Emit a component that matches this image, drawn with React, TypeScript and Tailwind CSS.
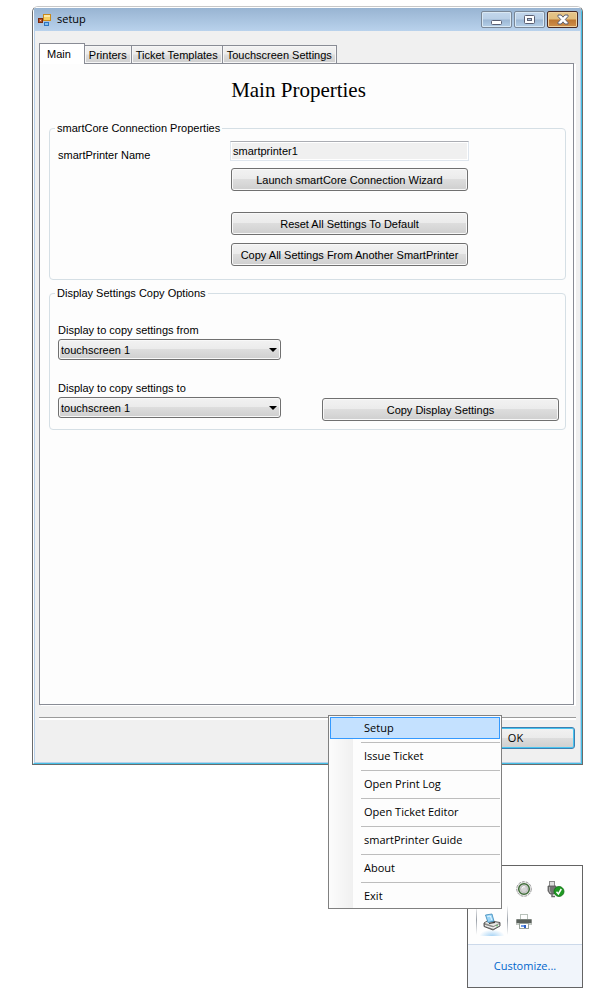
import { ReactNode, useId, useState } from 'react';
import { clsx } from 'clsx';

const TABS = ['Main', 'Printers', 'Ticket Templates', 'Touchscreen Settings'];

const MENU_ITEMS = [
  'Setup',
  'Issue Ticket',
  'Open Print Log',
  'Open Ticket Editor',
  'smartPrinter Guide',
  'About',
  'Exit',
];

function FormIcon() {
  return (
    <svg width="14" height="14" viewBox="0 0 14 14" aria-hidden="true" shapeRendering="crispEdges">
      <rect x="0" y="5" width="5" height="5" fill="#7a2a10" />
      <rect x="1" y="6" width="3" height="3" fill="#b5522a" />
      <rect x="2" y="7" width="1" height="1" fill="#f2c9a8" />
      <rect x="5" y="1" width="8" height="7" fill="#c98a1c" />
      <rect x="6" y="2" width="6" height="5" fill="#f6cf63" />
      <rect x="6" y="2" width="6" height="2" fill="#fce9a6" />
      <rect x="6" y="9" width="5" height="4" fill="#2f74c0" />
      <rect x="7" y="10" width="3" height="2" fill="#7fc0f2" />
    </svg>
  );
}

function SafelyRemoveIcon() {
  return (
    <svg width="18" height="18" viewBox="0 0 18 18" aria-hidden="true">
      <rect x="2.500" y="1.500" width="5" height="5" fill="#dedede" stroke="#8a8a8a" />
      <path d="M1 6h8v5l-2 3H3l-2-3z" fill="#747474" stroke="#555" strokeWidth="0.800" />
      <path d="M2.500 7v4l1.500 2" fill="none" stroke="#b0b0b0" />
      <path d="M5 14v2.500h3" fill="none" stroke="#6b6b6b" strokeWidth="1.500" />
      <circle cx="12" cy="11.500" r="5" fill="#1f9a22" stroke="#137016" strokeWidth="0.800" />
      <path d="M9.500 11.700l1.900 2.200 2.900-4.900" fill="none" stroke="#fff" strokeWidth="1.500" />
    </svg>
  );
}

function StatusDotIcon() {
  return (
    <svg width="16" height="16" viewBox="0 0 16 16" aria-hidden="true">
      <circle cx="8" cy="8" r="7.300" fill="#ececec" stroke="#9a9a9a" strokeDasharray="3 1" />
      <circle cx="8" cy="8" r="5.300" fill="#e2e2e2" stroke="#3f6b38" strokeWidth="1.500" />
      <circle cx="8" cy="8" r="3.600" fill="#d6d6d6" stroke="#b4b4b4" strokeWidth="0.800" />
      <path d="M6 7.500a2.200 2.200 0 0 1 3-1.600" fill="none" stroke="#fff" />
    </svg>
  );
}

function SmartPrinterIcon() {
  return (
    <svg width="18" height="18" viewBox="0 0 18 18" aria-hidden="true">
      <path d="M1 10l4-2.500 12 2v3.500l-7 4L1 13.500z" fill="#8d8d8a" stroke="#4c4c4c" strokeWidth="0.900" />
      <path d="M1.800 10L5 8l11.200 2-5.700 3z" fill="#e9e9e5" />
      <path d="M2 12.500l8.200 2.600 6-3.200" fill="none" stroke="#f5f5f5" strokeWidth="1.200" />
      <path d="M2.500 2l6.500-1 .500 2 1.500 5-6 1.500z" fill="#9bd6f8" stroke="#3c88b8" strokeWidth="0.800" />
      <path d="M4.300 3.500l3-.5 1.500 4" fill="none" stroke="#e8f7ff" />
      <path d="M6 10.300l6-1" stroke="#3a3a3a" strokeWidth="1.200" />
      <circle cx="14" cy="12.800" r="0.800" fill="#42b04a" />
    </svg>
  );
}

function PrinterIcon() {
  return (
    <svg width="16" height="16" viewBox="0 0 16 16" aria-hidden="true">
      <rect x="4.500" y="0.500" width="7" height="5" fill="#fff" stroke="#b9c2bb" />
      <rect x="0" y="5" width="16" height="6" rx="1" fill="#8b8f8b" />
      <rect x="1" y="6" width="14" height="3" fill="#59605a" />
      <rect x="1" y="5" width="14" height="1" fill="#7c837d" />
      <rect x="0" y="9" width="16" height="2" rx="1" fill="#c5cac5" />
      <rect x="3.500" y="9.500" width="9" height="5" fill="#fff" stroke="#9aa39c" />
      <rect x="5" y="11" width="3" height="2" fill="#6d9be6" />
      <rect x="8" y="11" width="2" height="3" fill="#2d5fc4" />
    </svg>
  );
}

function CaptionButton({ label, close, children }: { label: string; close?: boolean; children: ReactNode }) {
  return (
    <button
      type="button"
      aria-label={label}
      className={clsx(
        'flex h-[17px] w-[31px] items-center justify-center rounded-[2px] border',
        close
          ? 'border-[#4a2a24] bg-[linear-gradient(#e6c58a_0%,#e2bd7c_48%,#bd7631_52%,#cf8f4c_100%)] shadow-[inset_0_0_0_1px_#efd2a0]'
          : 'border-[#7a8796] bg-[linear-gradient(#c3d7ec_0%,#b9cfe6_48%,#9bb6d3_52%,#b4cfe8_100%)] shadow-[inset_0_0_0_1px_#d9e8f4]',
      )}
    >
      {children}
    </button>
  );
}

function TitleBar() {
  return (
    <header className="flex h-[23px] items-start justify-between bg-[linear-gradient(#98b4d2,#b9d2ec)] pr-[3px] pl-[4px]">
      <div className="flex h-full items-center gap-[5px]">
        <FormIcon />
        <h1 className="font-['Open_Sans',sans-serif] text-[11px] text-black">setup</h1>
      </div>
      <div className="mt-[3px] flex gap-[2px]">
        <CaptionButton label="Minimize">
          <svg width="12" height="13" viewBox="0 0 12 13" aria-hidden="true">
            <rect x="0.500" y="7.500" width="10" height="4" rx="1" fill="#fff" stroke="#5a5f72" />
          </svg>
        </CaptionButton>
        <CaptionButton label="Maximize">
          <svg width="11" height="9" viewBox="0 0 11 9" aria-hidden="true">
            <rect x="0.500" y="0.500" width="10" height="8" rx="1" fill="#fff" stroke="#5a5f72" />
            <rect x="3.500" y="3.500" width="4" height="2" fill="#a9c2de" stroke="#5a5f72" />
          </svg>
        </CaptionButton>
        <CaptionButton label="Close" close>
          <svg width="12" height="11" viewBox="0 0 12 11" aria-hidden="true">
            <path
              d="M1 1h3.200L6 3.200 7.800 1H11v1.500L8.300 5.500 11 8.500V10H7.800L6 7.800 4.200 10H1V8.500l2.700-3L1 2.500z"
              fill="#fff"
              stroke="#5c5f70"
            />
          </svg>
        </CaptionButton>
      </div>
    </header>
  );
}

function PushButton({ className, children }: { className?: string; children: ReactNode }) {
  return (
    <button
      type="button"
      className={clsx(
        'rounded-[3px] border bg-[linear-gradient(#f2f2f2_0%,#ebebeb_48%,#dddddd_50%,#cfcfcf_100%)] text-center leading-[20px]',
        className,
      )}
    >
      {children}
    </button>
  );
}

const plainButton = 'h-[23px] w-[237px] border-[#707070] shadow-[inset_0_0_0_1px_#f8f8f8]';

function GroupBox({ title, children }: { title: string; children: ReactNode }) {
  return (
    <fieldset className="mr-[7px] ml-[9px] rounded-[4px] border border-[#d5dfe5]">
      <legend className="ml-[5px] px-[2px] leading-[13px]">{title}</legend>
      {children}
    </fieldset>
  );
}

function DisplaySelect({ label }: { label: string }) {
  const id = useId();
  return (
    <div className="flex flex-col">
      <label htmlFor={id} className="pb-[2px] leading-[13px]">
        {label}
      </label>
      <div className="relative">
        <select
          id={id}
          className="block h-[21px] w-full appearance-none rounded-[3px] border border-[#707070] bg-[linear-gradient(#f2f2f2_0%,#ebebeb_48%,#dddddd_50%,#cfcfcf_100%)] pt-[2px] pl-[2px] shadow-[inset_0_0_0_1px_#f8f8f8]"
        >
          <option>touchscreen 1</option>
        </select>
        <svg className="pointer-events-none absolute top-[9px] right-[4px]" width="8" height="4" viewBox="0 0 8 4" aria-hidden="true">
          <path d="M0 0h8L4 4z" fill="#000" />
        </svg>
      </div>
    </div>
  );
}

function TabStrip() {
  const [active, setActive] = useState('Main');
  return (
    <div role="tablist" className="flex h-[20px] items-end">
      {TABS.map((tab) => (
        <button
          key={tab}
          type="button"
          role="tab"
          aria-selected={tab === active}
          onClick={() => setActive(tab)}
          className={clsx(
            'border-t border-r border-[#898c95]',
            tab === active
              ? 'relative -mb-px h-[21px] border-l bg-white pr-[13px] pl-[7px] leading-[18px]'
              : 'h-[18px] bg-[linear-gradient(#f3f3f3_0%,#ebebeb_48%,#dddddd_52%,#cfcfcf_100%)] px-[4px] leading-[18px] shadow-[inset_0_0_0_1px_#f6f6f6]',
          )}
        >
          {tab}
        </button>
      ))}
    </div>
  );
}

function MainPanel() {
  return (
    <div role="tabpanel" className="mr-[2px] min-h-[642px] border border-[#898c95] bg-[#fdfdfd] pt-[14px] shadow-[2px_1px_0_#fff]">
      <h2 className="mb-[20px] pr-[16px] text-center font-['Liberation_Serif',serif] text-[21px] leading-[24px]">
        Main Properties
      </h2>

      <GroupBox title="smartCore Connection Properties">
        <div className="flex pt-[6px] pb-[13px] pl-[8px]">
          <label htmlFor="printer-name" className="w-[172px] pt-[7px] leading-[15px]">
            smartPrinter Name
          </label>
          <div className="flex w-[239px] flex-col items-center">
            <input
              id="printer-name"
              type="text"
              readOnly
              value="smartprinter1"
              className="h-[20px] w-full border border-[#dfe6ee] border-t-[#abadb3] bg-[#f0f0f0] px-[2px] shadow-[inset_0_0_0_1px_#fff] outline-none"
            />
            <PushButton className={clsx(plainButton, 'mt-[7px]')}>Launch smartCore Connection Wizard</PushButton>
            <PushButton className={clsx(plainButton, 'mt-[21px]')}>Reset All Settings To Default</PushButton>
            <PushButton className={clsx(plainButton, 'mt-[8px]')}>Copy All Settings From Another SmartPrinter</PushButton>
          </div>
        </div>
      </GroupBox>

      <div className="mt-[7px]">
        <GroupBox title="Display Settings Copy Options">
          <div className="flex items-end justify-between pt-[24px] pr-[6px] pb-[8px] pl-[8px]">
            <div className="flex w-[223px] flex-col gap-[22px] pb-[3px]">
              <DisplaySelect label="Display to copy settings from" />
              <DisplaySelect label="Display to copy settings to" />
            </div>
            <PushButton className={plainButton}>Copy Display Settings</PushButton>
          </div>
        </GroupBox>
      </div>
    </div>
  );
}

function SetupWindow() {
  return (
    <main className="overflow-hidden rounded-t-[6px] border border-[#6b6b6b] border-t-[#c8c8c8]">
      <div className="border border-t-white border-r-[#45c0e6] border-b-[#45c0e6] border-l-white">
        <TitleBar />
        <div className="border-x border-b border-[#b9d1ea] bg-[#f0f0f0] px-[4px] pt-[12px] pb-[13px]">
          <TabStrip />
          <MainPanel />
          <div className="mt-[12px] h-[3px] border-t border-[#9a9a9a] bg-white" />
          <div className="mt-[7px] flex justify-end pr-px">
            <PushButton className="h-[22px] w-[119px] border-[#3c7fb1] font-['Open_Sans',sans-serif] shadow-[inset_0_0_0_1px_#48c4f0]">
              OK
            </PushButton>
          </div>
        </div>
      </div>
    </main>
  );
}

function ContextMenu() {
  return (
    <ul
      role="menu"
      className="absolute right-[81px] bottom-[79px] w-[174px] border border-[#808080] bg-[linear-gradient(90deg,#fcfcfc_0px,#f0f0f0_24px,#fdfdfd_24px)] p-px text-[11px]"
    >
      {MENU_ITEMS.map((item, i) => (
        <li key={item} role="none">
          {i > 0 && <hr className="mt-[3px] mb-[2px] ml-[31px] border-[#bdbdbd]" />}
          <button
            type="button"
            role="menuitem"
            className={clsx(
              'block h-[22px] w-full border pl-[33px] text-left leading-[20px]',
              i === 0 ? 'border-[#3399ff] bg-[#c4e1ff]' : 'border-transparent',
            )}
          >
            {item}
          </button>
        </li>
      ))}
    </ul>
  );
}

function TrayButton({ label, hot, children }: { label: string; hot?: boolean; children: ReactNode }) {
  return (
    <button type="button" aria-label={label} className="relative flex items-center justify-center">
      {hot && (
        <>
          <span className="absolute top-0 bottom-[3px] left-0 w-px bg-[linear-gradient(#fff,#9aa0a8_50%,#fff)]" />
          <span className="absolute top-0 right-0 bottom-[3px] w-px bg-[linear-gradient(#fff,#9aa0a8_50%,#fff)]" />
          <span className="absolute inset-x-[4px] bottom-[2px] h-[6px] bg-[radial-gradient(ellipse_at_bottom,#a9d4f5,#fff_75%)]" />
        </>
      )}
      <span className="relative">{children}</span>
    </button>
  );
}

function Tray() {
  return (
    <aside className="w-[116px] border border-[#646464] bg-[#fefefe] text-[11px]">
      <div className="grid grid-cols-[32px_32px_32px] grid-rows-[33px_33px] py-[6px] pl-[8px]">
        <span />
        <TrayButton label="Status">
          <StatusDotIcon />
        </TrayButton>
        <TrayButton label="Safely Remove Hardware">
          <SafelyRemoveIcon />
        </TrayButton>
        <TrayButton label="smartPrinter" hot>
          <SmartPrinterIcon />
        </TrayButton>
        <TrayButton label="Printer">
          <PrinterIcon />
        </TrayButton>
      </div>
      <div className="border-t border-[#ccd9ea] bg-[#f1f5fb] text-center leading-[42px]">
        <a href="#customize" className="text-[#0066cc]">
          Customize...
        </a>
      </div>
    </aside>
  );
}

export default function App() {
  return (
    <div className="bg-white pt-[6px] pr-[30px] pb-[8px] pl-[32px] font-['Liberation_Sans',Arial,sans-serif] text-[11px] text-black">
      <SetupWindow />
      <div className="relative mt-[100px] ml-auto w-fit font-['Open_Sans',sans-serif]">
        <Tray />
        <ContextMenu />
      </div>
    </div>
  );
}
